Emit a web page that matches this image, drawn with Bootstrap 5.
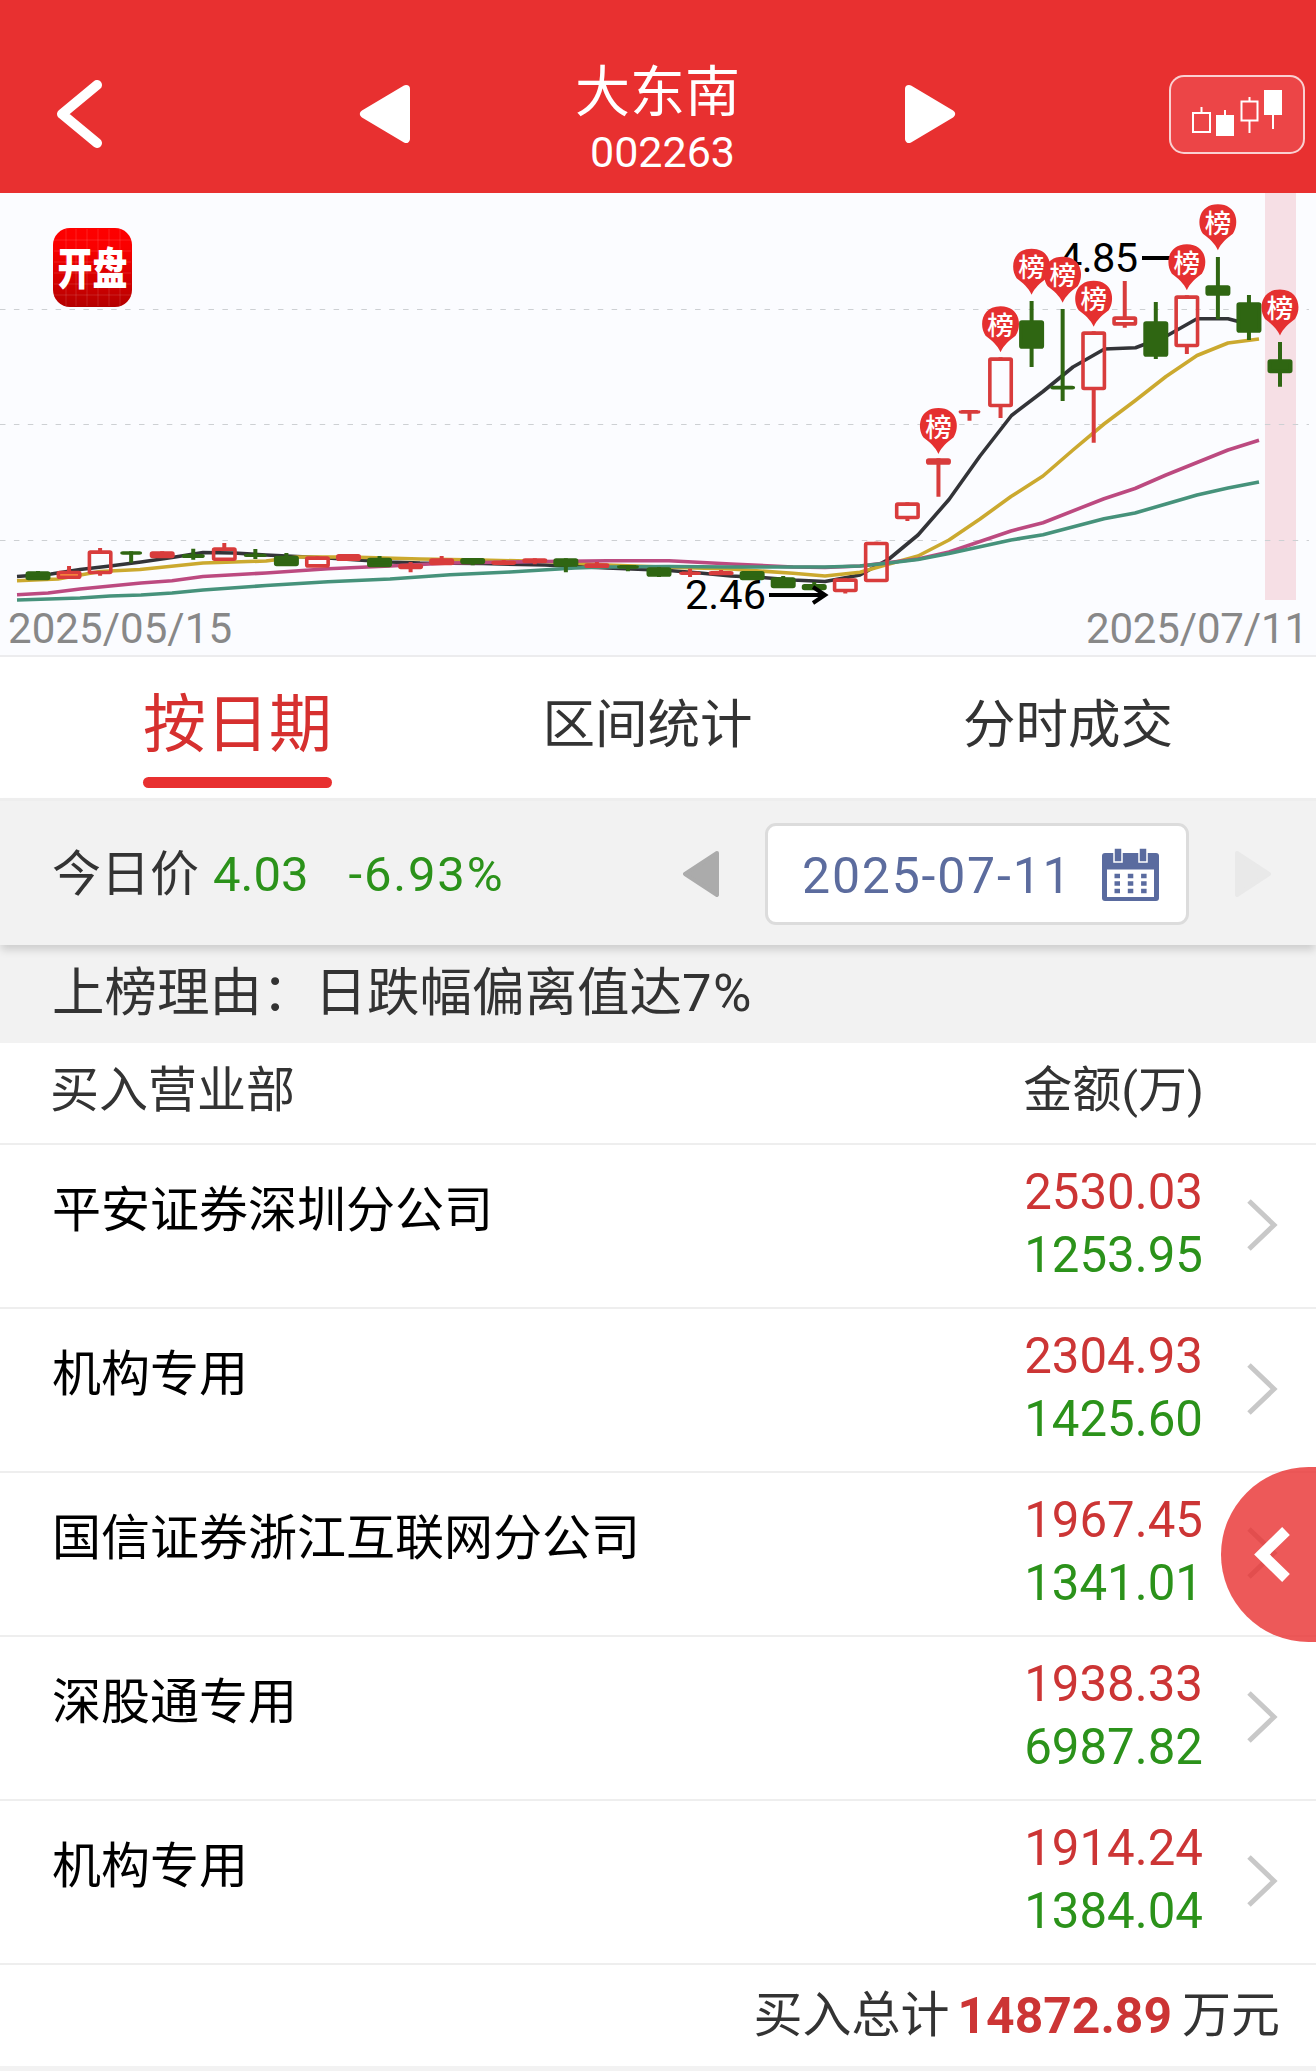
<!DOCTYPE html>
<html lang="zh-CN">
<head>
<meta charset="utf-8">
<meta name="viewport" content="width=device-width, initial-scale=1">
<title>大东南 002263</title>
<link href="https://cdn.jsdelivr.net/npm/bootstrap@5.3.0/dist/css/bootstrap.min.css" rel="stylesheet">
<style>
  body { font-family: Roboto, "Noto Sans CJK SC", sans-serif; color: #333; background: #f2f2f2; font-size: 49px; line-height: 1; overflow-x: hidden; }
  svg { display: block; flex: none; }
  .topbar { height: 193px; background: #e83030; color: #fff; padding: 0 11px 0 56px; }
  .topbar .stock { width: 272px; padding-top: 60px; }
  .back-wrap { padding-top: 80px; }
  .tools { padding-top: 40px; }
  .stock-name { font-size: 55px; line-height: 64px; }
  .stock-code { font-size: 43px; line-height: 56px; padding-left: 10px; }
  .icon-prev { margin: 5px 0 0 257px; }
  .icon-next { margin: 45px 213px 0 0; }
  .kbtn { width: 136px; height: 79px; border: 2px solid rgba(255,255,255,.75); border-radius: 15px; background: #ec4547; margin-top: 35px; }
  .chart-box { height: 464px; background: #fbfcff; border-bottom: 2px solid #ececee; }
  .tabs { height: 141px; padding: 0 143px; font-size: 52.5px; }
  .tabs .tab-item { height: 131px; line-height: 122px; padding: 4px 0 0; border: 0; color: #333; background: none; }
  .tabs .tab-item.active { font-size: 63px; color: #d6302f; line-height: 112px; position: relative; }
  .tabs .tab-item.active::after { content: ""; position: absolute; left: 0; right: 0; bottom: 0; height: 11px; border-radius: 5.5px; background: #e83030; }
  .pricebar { height: 147px; background: #f2f2f2; border-top: 3px solid #eee; padding: 2px 45px 0 52px; box-shadow: 0 6px 8px -1px rgba(0,0,0,.15); z-index: 1; }
  .price { margin-left: 14px; }
  .change { margin-left: 40px; letter-spacing: 1.8px; }
  .down { color: #2b921a; }
  .up { color: #cc3535; }
  .datebox { width: 424px; height: 102px; margin: 0 45px; background: #fff; border: 3px solid #dcdcdc; border-radius: 11px; color: #5c6c9e; padding: 0 27px 0 34px; font-size: 50px; letter-spacing: 1.8px; }
  .datebox span { padding-top: 3px; }
  .reason { height: 98px; font-size: 52.5px; line-height: 97px; padding-left: 52px; background: #f2f2f2; }
  .reason span { letter-spacing: 1.5px; }
  .list-head { height: 102px; line-height: 96px; padding: 0 112px 0 50px; border-bottom: 2px solid #eee; }
  .seat { height: 164px; border-bottom: 2px solid #eee; padding: 0 38px 0 52px; color: #000; }
  .seat .who { line-height: 132px; }
  .seat .sums { font-size: 49.2px; line-height: 63px; margin-right: 44px; padding-top: 16px; }
  .seat svg { margin-top: 54px; }
  .total { height: 101px; background: #fff; line-height: 102px; padding-right: 36px; }
  .total b { font-size: 49.8px; margin: 0 10px 0 8px; }
  .drawer { position: absolute; right: 0; top: 1467px; width: 95px; height: 175px; border-radius: 88px 0 0 88px; background: rgba(232,48,48,.8); z-index: 2; }
</style>
<script src="https://cdn.jsdelivr.net/npm/bootstrap@5.3.0/dist/js/bootstrap.bundle.min.js"></script>
</head>
<body>
<main class="position-relative">
  <header class="topbar d-flex align-items-start">
    <div class="back-wrap d-flex">
      <svg width="46" height="68" viewBox="0 0 46 68" fill="none" stroke="#fff" stroke-width="10" stroke-linecap="round" stroke-linejoin="round"><path d="M41 5 6 34 41 63"/></svg>
      <svg class="icon-prev" width="52" height="58" viewBox="0 0 52 58"><path d="M47 4 5 29 47 54z" fill="#fff" stroke="#fff" stroke-width="8" stroke-linejoin="round"/></svg>
    </div>
    <div class="stock text-center mx-auto">
      <div class="stock-name">大东南</div>
      <div class="stock-code">002263</div>
    </div>
    <div class="tools d-flex align-items-start">
      <svg class="icon-next" width="52" height="58" viewBox="0 0 52 58"><path d="M5 4 47 29 5 54z" fill="#fff" stroke="#fff" stroke-width="8" stroke-linejoin="round"/></svg>
      <div class="kbtn">
        <svg width="132" height="75" viewBox="1171 77 132 75" fill="none" stroke="#fff" stroke-width="2">
          <path d="M1193 113h17v19h-17zM1201.500 107v6M1241.500 101.500h16v19h-16zM1249.500 97v5M1249.500 121v12"/>
          <path d="M1225 110v6M1273 114v15"/>
          <path d="M1216 115h18v21h-18zM1264 90h18v25h-18z" fill="#fff" stroke="none"/>
        </svg>
      </div>
    </div>
  </header>

  <section class="chart-box">
    <svg id="kline" width="1316" height="462" viewBox="0 193 1316 462">
      <defs>
        <linearGradient id="appBg" x1="0" y1="0" x2="0" y2="1"><stop offset="0" stop-color="#fe0000"/><stop offset=".25" stop-color="#fa0000"/><stop offset="1" stop-color="#b40000"/></linearGradient>
        <g id="pin">
          <path d="M-15 29.500C-22 19-19 0 0 0s22 19 15 29.500C9 34 3 39 0 46-3 39-9 34-15 29.500z" fill="#e53030"/>
          <text x="0" y="28.500" text-anchor="middle" font-size="26.500" font-weight="500" fill="#fff">榜</text>
        </g>
      </defs>
      <rect x="1265" y="193" width="31" height="407" fill="#f6dfe5"/>
      <path d="M0 309.500H1309M0 424.500H1309M0 540.500H1309" stroke="#cdd0d3" stroke-width="1.200" stroke-dasharray="5.500 8.400" fill="none"/>
      <g>
        <rect x="53" y="228" width="79" height="79" rx="17" fill="url(#appBg)"/>
        <path d="M66 229v77M76 229v77M87 229v77M98 229v77M109 229v77M120 229v77M54 240h77M54 251h77M54 262h77M54 273h77M54 284h77M54 295h77" stroke="#fff" stroke-opacity=".13"/>
        <text transform="translate(92.500 285) scale(1 1.280)" text-anchor="middle" font-size="35" font-weight="900" fill="#fff">开盘</text>
      </g>
      <g fill="none" stroke-width="3.600" stroke-linejoin="round">
        <polyline stroke="#333438" points="17,576.500 51,574 80,569.500 110,566 141,562 172,557.500 203,552.500 234,553 266,555 297,556.500 328,558 358,560 390,562 420,563 483,563.500 545,565 607,568 669,570.500 700,573 731,576 762,577.500 793,580 825,581.500 860,575 889,559 918,535 949,499.500 980,456 1011.500,415.500 1043,391.500 1073,367 1104.500,349 1135.500,347.700 1166.500,336 1197,318.700 1228,318.700 1259,327"/>
        <polyline stroke="#cba92f" points="17,580.700 58,579 100,571.500 140,569.500 203,563 266,561 297,557 350,557 420,559 480,560 545,561.500 607,565 669,567.300 731,569 793,573.300 825,576 860,572.300 889,564 918,556 949,540 980,519 1011,496.500 1043,476 1073,450 1104,424 1135,400.700 1166,376.500 1197,355.500 1228,343 1259,339"/>
        <polyline stroke="#bc4a80" points="17,594.700 48,593 80,589 141,583 172,580.700 203,576.500 266,573 328,568.700 390,566 450,563 545,561.500 607,560.700 669,560.700 731,564 793,567 825,567.500 860,566 889,562.500 918,559 949,552 1011,531 1043,522.700 1104,498.700 1135,488.500 1166,475 1197,462.500 1228,450 1259,440.300"/>
        <polyline stroke="#46927b" points="17,600 80,598 110,596 141,595 172,593 203,590 266,585.500 328,581.700 390,579 450,574.700 510,572 575,568 607,567 669,566.500 731,567 793,567 825,567 860,566 889,563 918,559.500 949,553.500 1011,540 1043,534.700 1104,518.700 1135,513 1166,504 1197,495 1228,488 1259,482"/>
      </g>
      <g id="candles"></g>
      <g fill="#000" font-size="41.500">
        <text x="1059" y="271.500" textLength="79">4.85</text>
        <text x="685" y="609" textLength="81">2.46</text>
      </g>
      <path d="M1142 258h42M769 595h56M813 587 825 595 813 603" stroke="#000" stroke-width="4" fill="none"/>
      <g id="pins"></g>
      <g fill="#888" font-size="42">
        <text x="8" y="642.500" textLength="224">2025/05/15</text>
        <text x="1086" y="642.500" textLength="222">2025/07/11</text>
      </g>
    </svg>
  </section>

  <nav class="tabs d-flex justify-content-between bg-white">
    <button class="tab-item active">按日期</button>
    <button class="tab-item">区间统计</button>
    <button class="tab-item">分时成交</button>
  </nav>

  <section class="pricebar d-flex align-items-center position-relative">
    <span>今日价</span>
    <span class="price down">4.03</span>
    <span class="change down">-6.93%</span>
    <svg class="ms-auto" width="37" height="46" viewBox="0 0 37 46"><path d="M34 2 2 23 34 44z" fill="#ababab" stroke="#ababab" stroke-width="4" stroke-linejoin="round"/></svg>
    <div class="datebox d-flex align-items-center justify-content-between">
      <span>2025-07-11</span>
      <svg width="57" height="53" viewBox="0 0 57 53">
        <path d="M3 5H54a3 3 0 0 1 3 3V50a3 3 0 0 1-3 3H3a3 3 0 0 1-3-3V8a3 3 0 0 1 3-3z" fill="#5a6b9f"/>
        <path d="M5 21.500H52V49H5z" fill="#fff"/>
        <path d="M12 0h8v14h-8zM37 0h8v14h-8z" fill="#5a6b9f" stroke="#fff" stroke-width="1.500"/>
        <path d="M12.500 28H46M12.500 35.500H46M12.500 43H46" stroke="#5a6b9f" stroke-width="4.600" stroke-dasharray="5.500 7.800"/>
      </svg>
    </div>
    <svg width="37" height="46" viewBox="0 0 37 46"><path d="M3 2 35 23 3 44z" fill="#e9e9e9" stroke="#e9e9e9" stroke-width="4" stroke-linejoin="round"/></svg>
  </section>

  <section class="reason">上榜理由：日跌幅偏离值达<span>7%</span></section>

  <section class="bg-white">
    <div class="list-head d-flex justify-content-between"><span>买入营业部</span><span>金额(万)</span></div>
    <div id="seats">
      <div class="seat d-flex align-items-start"><div class="who flex-grow-1">平安证券深圳分公司</div><div class="sums text-end"><div class="up">2530.03</div><div class="down">1253.95</div></div><svg width="31" height="52" viewBox="0 0 31 52" fill="none" stroke="#c8c8c8" stroke-width="5"><path d="M2 2 27 26 2 50"/></svg></div>
      <div class="seat d-flex align-items-start"><div class="who flex-grow-1">机构专用</div><div class="sums text-end"><div class="up">2304.93</div><div class="down">1425.60</div></div><svg width="31" height="52" viewBox="0 0 31 52" fill="none" stroke="#c8c8c8" stroke-width="5"><path d="M2 2 27 26 2 50"/></svg></div>
      <div class="seat d-flex align-items-start"><div class="who flex-grow-1">国信证券浙江互联网分公司</div><div class="sums text-end"><div class="up">1967.45</div><div class="down">1341.01</div></div><svg width="31" height="52" viewBox="0 0 31 52" fill="none" stroke="#c8c8c8" stroke-width="5"><path d="M2 2 27 26 2 50"/></svg></div>
      <div class="seat d-flex align-items-start"><div class="who flex-grow-1">深股通专用</div><div class="sums text-end"><div class="up">1938.33</div><div class="down">6987.82</div></div><svg width="31" height="52" viewBox="0 0 31 52" fill="none" stroke="#c8c8c8" stroke-width="5"><path d="M2 2 27 26 2 50"/></svg></div>
      <div class="seat d-flex align-items-start"><div class="who flex-grow-1">机构专用</div><div class="sums text-end"><div class="up">1914.24</div><div class="down">1384.04</div></div><svg width="31" height="52" viewBox="0 0 31 52" fill="none" stroke="#c8c8c8" stroke-width="5"><path d="M2 2 27 26 2 50"/></svg></div>
    </div>
    <div class="total d-flex justify-content-end"><span>买入总计</span><b class="up">14872.89</b><span>万元</span></div>
  </section>

  <div class="drawer">
    <svg width="95" height="175" viewBox="1221 1467 95 175"><path d="M1286 1531 1262 1554.500 1286 1578" fill="none" stroke="#fff" stroke-width="11"/></svg>
  </div>
</main>
<script>
  // [colour, high, body top, body bottom, low, body half-width, fill]
  const G = '#2f6612', R = '#d83c3c';
  const days = [
    [G,571,571.3,580.3,580],[R,566,570.7,579,579,12.5,'#ff9a3c'],[R,548,550.3,574.3,575.7],[G,551.3,551.3,554.7,562.7,11],[R,551.3,551.3,558.3,558,12.5,'#ff5555'],
    [G,548.7,554,558,559.7,11.5],[R,543,547.3,561,561],[G,549,553.7,557,559,11.5],[G,553,555.7,566.3,566],[R,556.3,556.3,567.7,567],
    [R,554,554,561,561,12.5,'#ff5050'],[G,556,557.7,567.3,567],[R,562,563.7,569.3,572.3,12.5,R],[R,556,558.3,565.3,565,12.5,R],[G,558,558,564.3,565.3],
    [R,560,560.7,565,565,12.5,R],[R,558.3,558.3,563,564.3,12.5,R],[G,558.3,558.3,566.7,572.3],[R,562,563.3,568,568,12.5,R],[G,565,565,568.7,571.3,11],
    [G,567.3,567.3,576.7,577],[R,568.7,571.5,575,577,11,R],[R,570,571,575.3,575,12.5,R],[G,571,571,580.3,580],[G,576,577.3,588.3,588],
    [G,582,584,590.3,590],[R,578.3,578.3,592.3,593.5],[R,541.7,541.7,582.3,582],[R,502.3,502.3,519.3,521],[R,458.3,458.3,464.7,496.7,12.5,R],
    [R,410,410,413.7,420.7,11,R],[R,357.3,357.3,407.3,418],[G,301,320.3,348.7,367],[G,309,385.7,389.3,401],[R,331.3,331.3,390.3,442.7],
    [R,281,316.3,325.7,327.7],[G,302,321.3,356.7,359],[R,295.3,295.3,347.3,354],[G,257,285.3,295.7,319.3],[G,295,302.3,332.7,340],[G,342,359.3,373.3,386.7]
  ];
  const cx = i => 38 + 31.05 * i;
  document.getElementById('candles').innerHTML = days.map(([c, hi, t, b, lo, w = 12.5, f], i) => {
    const x = cx(i), fill = f || (c === G ? G : 'none');
    const sw = Math.min(3.6, b - t);
    return `<path d="M${x} ${hi}V${t + 1}M${x} ${b - 1}V${lo}" stroke="${c}" stroke-width="4"/>` +
      `<rect x="${x - w + sw / 2}" y="${t + sw / 2}" width="${2 * w - sw}" height="${Math.max(.1, b - t - sw)}" rx="1" fill="${fill}" stroke="${c}" stroke-width="${sw}" stroke-linejoin="round"/>`;
  }).join('');
  const pins = [[29,408],[31,306.3],[32,248.7],[33,256.7],[34,280.7],[37,244.3],[38,204.3],[40,289.5]];
  document.getElementById('pins').innerHTML = pins.map(([i, y]) => `<use href="#pin" x="${cx(i)}" y="${y}"/>`).join('');
</script>
</body>
</html>
